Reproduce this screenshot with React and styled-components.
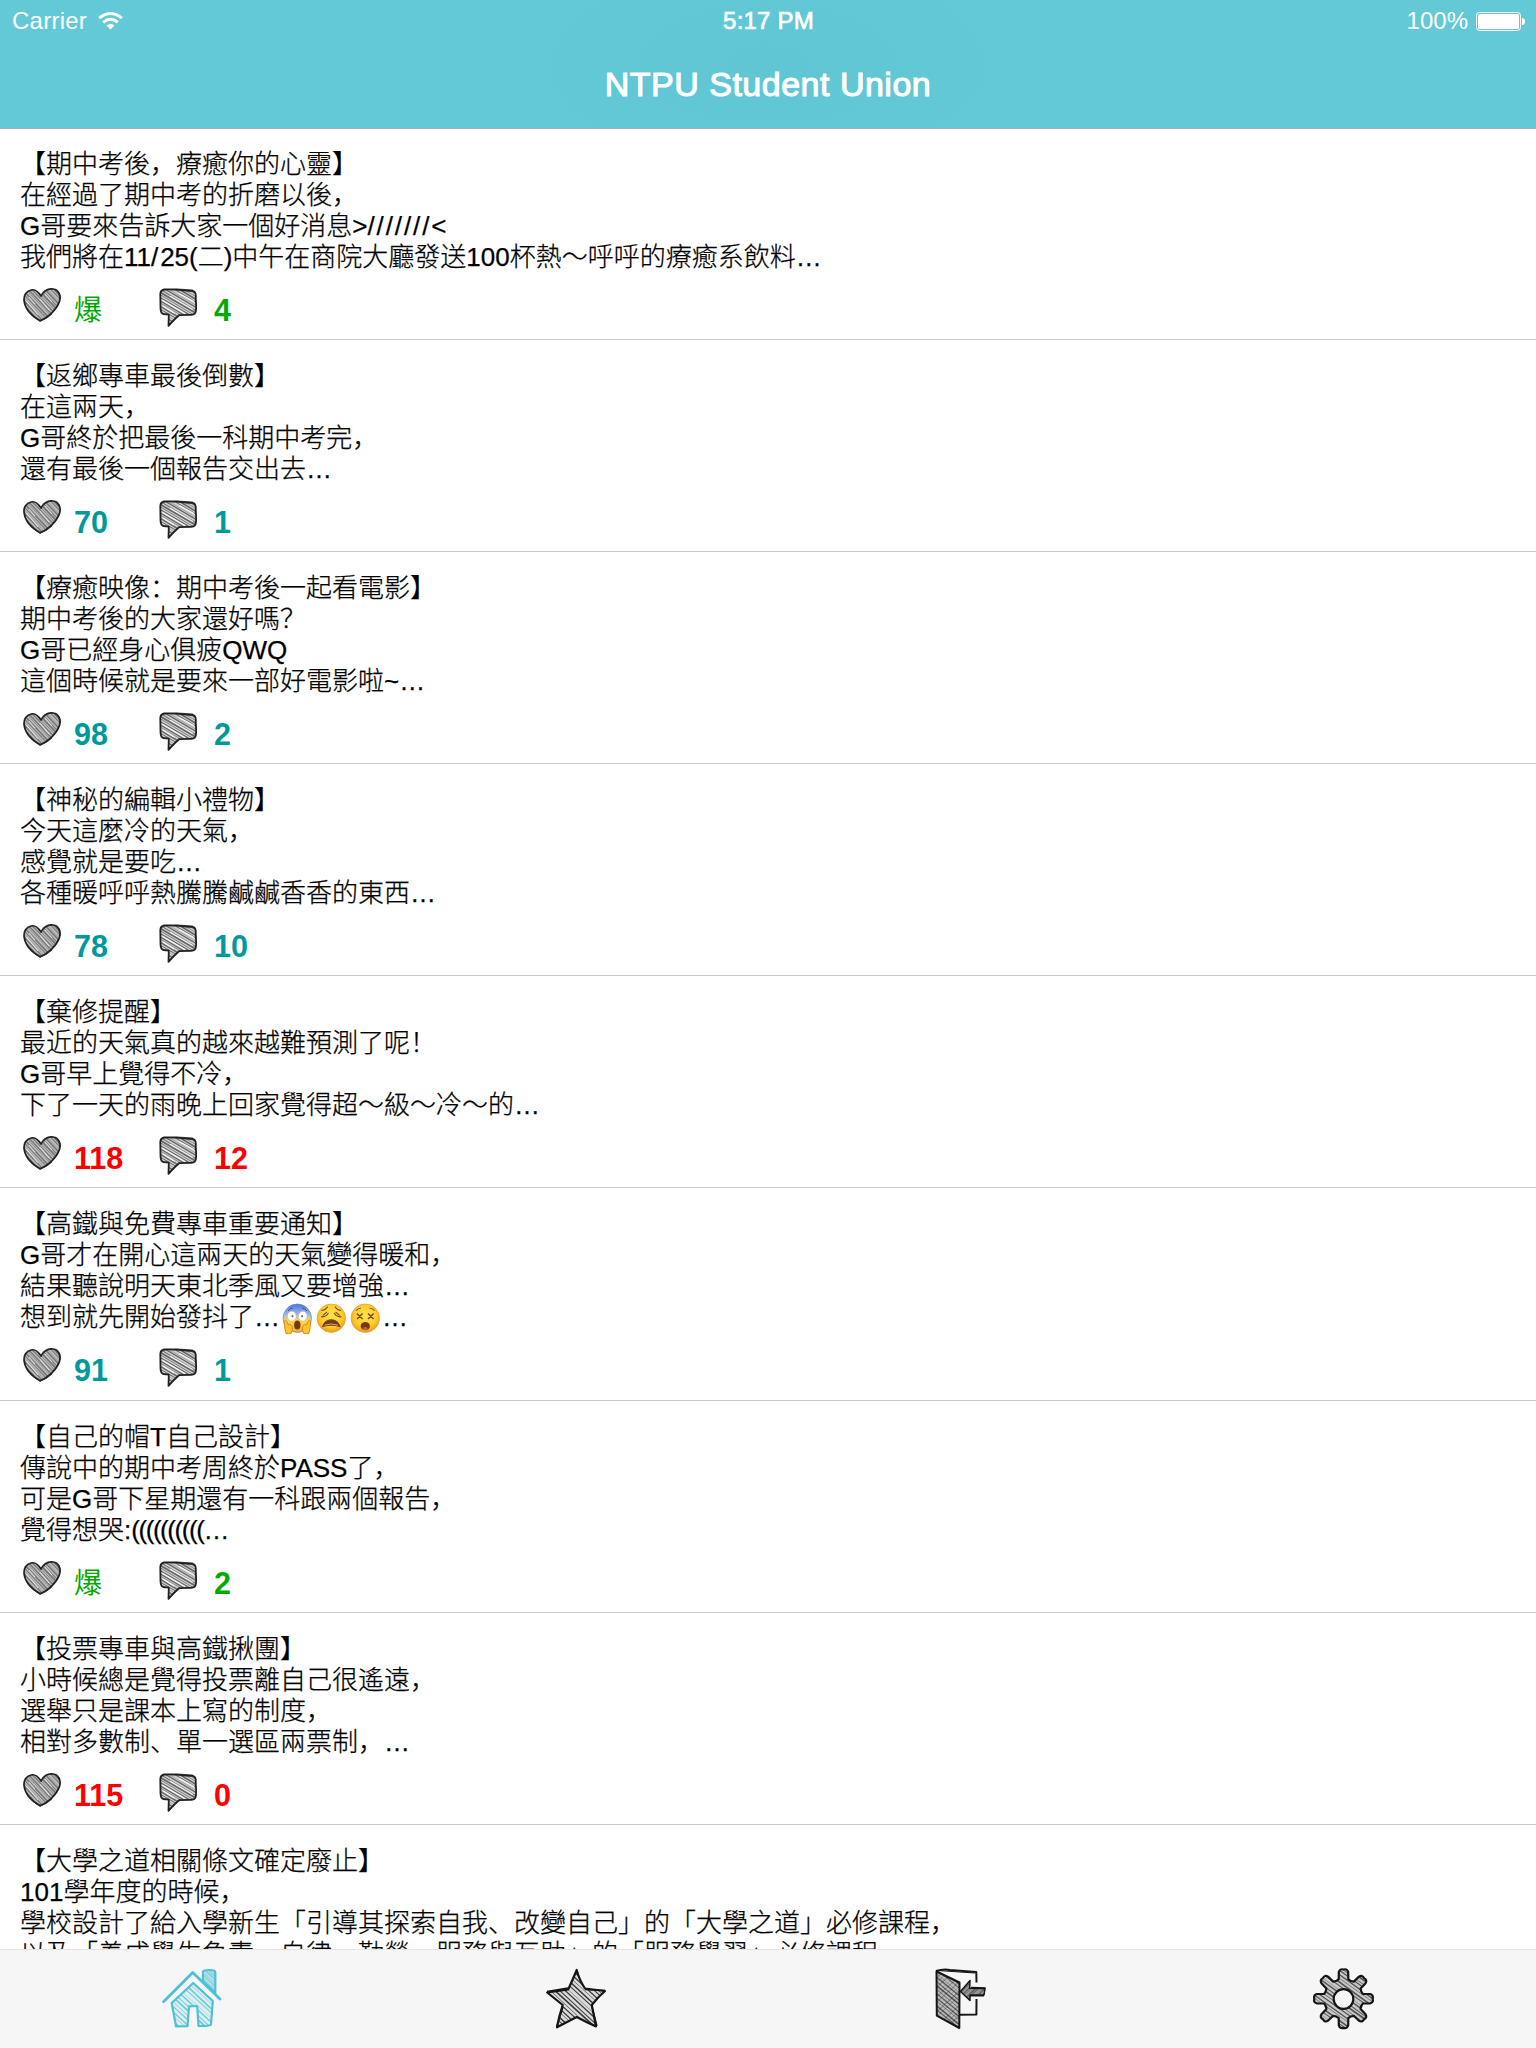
import React, { useId } from 'react';
import styled, { createGlobalStyle, css } from 'styled-components';

const GlobalStyle = createGlobalStyle`
  * { box-sizing: border-box; }
  html, body { margin: 0; padding: 0; background: #fff; overflow: hidden; }
`;

const latin = '"Liberation Sans", Arial';

const Screen = styled.div`
  width: 1536px;
  height: 2048px;
  display: flex;
  flex-direction: column;
  overflow: hidden;
  background: #fff;
  font-family: ${latin}, "Noto Sans CJK SC", sans-serif;
  text-spacing-trim: space-all;
`;

const Header = styled.header`
  flex: none;
  height: 129px;
  display: flex;
  flex-direction: column;
  border-bottom: 1px solid #a9b0b1;
  background: radial-gradient(ellipse 260px 120px at 50% 50%, #60c6d4, #63c9d7);
  color: #fff;
`;

const StatusBar = styled.div`
  height: 41px;
  padding: 1px 11px 0 12px;
  display: grid;
  grid-template-columns: 1fr auto 1fr;
  align-items: center;
  font-size: 24px;
  line-height: 40px;
`;

const StatusGroup = styled.div`
  display: flex;
  align-items: center;
  gap: ${(p) => p.$gap}px;
  justify-content: ${(p) => (p.$end ? 'flex-end' : 'flex-start')};
  letter-spacing: ${(p) => (p.$end ? 0 : 0.25)}px;
`;

const Clock = styled.div`
  letter-spacing: 0.2px;
  -webkit-text-stroke: 0.7px #fff;
`;

const Title = styled.h1`
  margin: 0;
  height: 87px;
  text-align: center;
  font-size: 34px;
  font-weight: 400;
  line-height: 86px;
  letter-spacing: 0.5px;
  -webkit-text-stroke: 1.1px #fff;
`;

const Feed = styled.main`
  flex: 1;
  min-height: 0;
  overflow: hidden;
`;

const Post = styled.article`
  height: 212.12px;
  padding: 21px 20px 0;
  border-bottom: 1px solid #c8c7cc;
  &:first-child { height: 211px; padding-top: 20px; }
`;

const Line = styled.p`
  margin: 0;
  height: 31px;
  font-size: 26px;
  font-weight: 300;
  line-height: 31px;
  color: #000;
  white-space: pre;
  -webkit-text-stroke: 0.25px #000;
`;

const Tracked = styled.span`
  letter-spacing: ${(p) => p.$by}px;
`;

const tones = { green: '#0a0', teal: '#009999', red: '#f00' };

const Stats = styled.div`
  display: flex;
  height: 48px;
  padding: 15px 0 0 3px;
  align-items: flex-start;
  color: ${(p) => tones[p.$tone]};
`;

const Count = styled.span`
  width: ${(p) => p.$width}px;
  padding-top: ${(p) => (p.$glyph ? 6 : 5)}px;
  margin-left: ${(p) => p.$gap}px;
  font-size: ${(p) => (p.$glyph ? 28 : 30.5)}px;
  font-weight: ${(p) => (p.$glyph ? 400 : 700)};
  line-height: 34px;
`;

const EmojiSlot = styled.span`
  display: inline-block;
  width: 34px;
  height: 31px;
  padding: 1px 0 0 2px;
  vertical-align: top;
`;

const TabBar = styled.nav`
  flex: none;
  height: 99px;
  display: grid;
  grid-template-columns: repeat(4, 1fr);
  border-top: 1px solid #e4e4e4;
  background: #f6f6f6;
`;

const Tab = styled.button`
  display: flex;
  justify-content: center;
  padding: 19px 0 0;
  border: 0;
  background: none;
  color: ${(p) => (p.$active ? '#4cc2d5' : '#151515')};
`;

const Icon = styled.svg`
  display: block;
  flex: none;
  overflow: visible;
  ${(p) => p.$dark && css`color: #202020;`}
`;

const weights = [1.3, 0.6, 1.6, 1.0, 0.4, 1.4, 1.0, 1.7, 0.7, 1.2];

function Hatch({ shape, angle, step = 2.9, tint = 0.14, strength = 0.85 }) {
  const id = useId().replace(/:/g, '');
  const lines = [];
  for (let i = 0; i < Math.ceil(96 / step); i += 1) {
    const y = -48 + i * step;
    lines.push(
      <path
        key={i}
        d={`M-48 ${y + (i % 3) * 0.3}L48 ${y - (i % 2) * 0.7}`}
        strokeWidth={weights[i % weights.length]}
      />
    );
  }
  return (
    <g>
      <clipPath id={id}><path d={shape} clipRule="evenodd" /></clipPath>
      <path d={shape} fill="currentColor" fillRule="evenodd" opacity={tint} />
      <g clipPath={`url(#${id})`}>
        <g transform={`translate(29 29) rotate(${angle})`} stroke="currentColor" opacity={strength}>
          {lines}
        </g>
      </g>
    </g>
  );
}

const heart = 'M18 8C14.5 2.5 12 1 8 2C3 3 .7 7.5 1 12C1.6 19 7 27 17.2 32.8C25 29.5 33.5 22 36.5 13.5C38.5 7 35 1.5 30.5 1C25.5 .3 21 2 18 8Z';
const HeartIcon = () => (
  <Icon width="38" height="34" viewBox="0 0 38 34" fill="none" $dark>
    <Hatch shape={heart} angle={47} step={2.3} tint={0.3} strength={0.45} />
    <g stroke="#fff" strokeWidth="1" opacity="0.75">
      <path d="M3.5 13L15 27M6 9L12 16M17 11L26 22M22 6L29 14" />
    </g>
    <path d={heart} stroke="currentColor" strokeWidth="1.7" strokeLinejoin="round" />
    <path d="M4 22Q9 29 17 33.3Q24 31 29 26" stroke="currentColor" strokeWidth="0.8" />
  </Icon>
);

const bubble = 'M5 1.5C15 .7 27 2.8 33.5 2.9Q36.8 3.2 36.8 8C36.5 13 38 20 36.5 24.5Q35.5 27 31 26.8L20 27.2Q16 30.5 9.5 37.8L9.8 26.7L4.5 26Q1.6 25.5 1.5 20L1.3 6Q1.5 2.2 5 1.5Z';
const BubbleIcon = () => (
  <Icon width="39" height="39" viewBox="0 0 39 39" fill="none" $dark>
    <Hatch shape={bubble} angle={31} step={2.4} tint={0.2} strength={0.6} />
    <g stroke="#fff" strokeWidth="1.2" opacity="0.85">
      <path d="M3 12L26 25.5M11 8L34 21.5M20 5.5L35 13.5M4 18L15 25" />
    </g>
    <path d={bubble} stroke="currentColor" strokeWidth="1.8" strokeLinejoin="round" />
    <path d="M4 1.8Q17 0 34 2" stroke="currentColor" strokeWidth="0.7" />
  </Icon>
);

const walls = 'M9.7 34L31.2 14L50.8 32L49 55.5Q48 57.2 36.5 57L35.2 37L27 37.3L25.5 57.2L14 57.3Z';
const chimney = 'M41 12.5V2.5Q42 1 47.5 1Q53.3 1 53.3 3V24Z';
const HomeIcon = () => (
  <Icon width="60" height="60" viewBox="0 0 60 60" fill="none">
    <Hatch shape={walls} angle={43} step={3.5} strength={0.8} />
    <Hatch shape={chimney} angle={43} step={2.6} tint={0.4} strength={0.45} />
    <g stroke="currentColor" strokeWidth="2.2" strokeLinejoin="round" strokeLinecap="round">
      <path d={walls} />
      <path d={chimney} />
      <path d="M1.5 32.8L30.7 3.5L58 30" strokeWidth="2.8" />
    </g>
  </Icon>
);

const star = 'M30.7 1C32.5 8 36 15 39 19.5L59 22Q52 28 45.8 36L50 57.5Q40 53 30.7 48L11 58.3Q13 47 16.7 36L1.2 23.5Q12 21.5 22.3 20.3Q27 10 30.7 1Z';
const StarIcon = () => (
  <Icon width="60" height="60" viewBox="0 0 60 60" fill="none">
    <Hatch shape={star} angle={43} step={3.3} tint={0.12} strength={0.8} />
    <path d={star} stroke="currentColor" strokeWidth="2.2" strokeLinejoin="round" />
    <path d="M22 19L1 22.5M39 20.5L59 21.5M17 38L10.5 58M46 38L51 57" stroke="currentColor" strokeWidth="1.4" />
  </Icon>
);

const door = 'M6.5 2.5L29.5 13.5L29.3 59L6.8 46.7Z';
const arrow = 'M30.5 22.5L40 11.5L39.6 19.2L55 19.5L54 26L40 26.2L40 31.5Z';
const DoorIcon = () => (
  <Icon width="60" height="60" viewBox="0 0 60 60" fill="none">
    <Hatch shape={door} angle={40} step={3.1} tint={0.25} strength={0.6} />
    <Hatch shape={door} angle={-42} step={3.6} tint={0} strength={0.25} />
    <Hatch shape={arrow} angle={-45} step={2.4} tint={0.4} strength={0.45} />
    <g stroke="currentColor" strokeWidth="2" strokeLinejoin="round">
      <path d={door} />
      <path d={arrow} strokeWidth="1.5" />
      <path d="M41 18.8L55.5 19.2M40 26.5H54" />
      <path d="M6 2Q13 -.2 20 .9L46.3 3L46.5 13.5M46.5 30L46.4 45.5L30 45.8" />
      <path d="M7 1.5L45 4" strokeWidth="1.2" />
    </g>
  </Icon>
);

function gearPath() {
  const at = (r, deg) => {
    const a = (deg * Math.PI) / 180;
    return `${(29.5 + r * Math.cos(a)).toFixed(1)} ${(29.7 + r * Math.sin(a)).toFixed(1)}`;
  };
  let d = '';
  for (let i = 0; i < 8; i += 1) {
    const c = i * 45 - 90;
    d += `${i ? 'L' : 'M'}${at(20, c - 14)}L${at(27, c - 10)}Q${at(30.5, c - 7)} ${at(29.2, c)}`;
    d += `Q${at(30.5, c + 7)} ${at(27, c + 10)}L${at(20, c + 14)}Q${at(18.6, c + 22.5)} ${at(20, c + 31)}`;
  }
  return `${d}ZM39.3 30A9.8 9.8 0 1 0 19.7 30A9.8 9.8 0 1 0 39.3 30Z`;
}

const gear = gearPath();
const GearIcon = () => (
  <Icon width="60" height="60" viewBox="0 0 60 60" fill="none">
    <Hatch shape={gear} angle={36} step={3.1} tint={0.2} strength={0.65} />
    <path d={gear} stroke="currentColor" strokeWidth="2.2" strokeLinejoin="round" />
  </Icon>
);

const WifiIcon = () => (
  <Icon width="25" height="18" viewBox="0 0 25 18" fill="none">
    <g stroke="#fff" strokeWidth="2.9">
      <path d="M1.2 6.1Q12.5 -3.1 23.8 6.1" />
      <path d="M5.2 10.3Q12.5 4.2 19.8 10.3" />
    </g>
    <path d="M8.5 13.4Q12.5 10.2 16.5 13.4L12.5 17.6Z" fill="#fff" />
  </Icon>
);

const BatteryIcon = () => (
  <Icon width="49" height="19" viewBox="0 0 49 19" fill="none">
    <rect x="0.5" y="0.5" width="44" height="18" rx="3" stroke="#fff" />
    <rect x="2" y="2" width="41" height="15" rx="1.6" fill="#fff" />
    <path d="M46 6Q49 6.4 49 9.5T46 13Z" fill="#fff" />
  </Icon>
);

function Emoji({ kind }) {
  const id = useId().replace(/:/g, '');
  const scream = kind === 'scream';
  return (
    <EmojiSlot>
      <Icon width="31" height="31" viewBox="0 0 31 31">
        <defs>
          <radialGradient id={`${id}f`} cx="50%" cy="42%" r="58%">
            <stop offset="0" stopColor="#ffe34a" />
            <stop offset="0.65" stopColor="#ffce2e" />
            <stop offset="1" stopColor="#f09a1c" />
          </radialGradient>
          <linearGradient id={`${id}s`} x1="0" y1="0" x2="0" y2="1">
            <stop offset="0" stopColor="#4a74d8" />
            <stop offset="0.38" stopColor="#a3bce9" />
            <stop offset="0.58" stopColor="#ffdb50" />
            <stop offset="1" stopColor="#f5ae22" />
          </linearGradient>
        </defs>
        <circle cx="15.3" cy="15.2" r="14.2" fill={`url(#${id}${scream ? 's' : 'f'})`} stroke={scream ? '#5d83cf' : '#e79a25'} strokeWidth="0.7" />
        {scream && (
          <g>
            <path d="M6 8Q8 5 11 5M20 5Q23 5 25 8" fill="none" stroke="#34539c" strokeWidth="1" />
            <ellipse cx="9.8" cy="13.2" rx="4.4" ry="5" fill="#fff" stroke="#b7a982" strokeWidth="0.5" />
            <ellipse cx="20.8" cy="13.2" rx="4.4" ry="5" fill="#fff" stroke="#b7a982" strokeWidth="0.5" />
            <circle cx="10.5" cy="13.3" r="1" fill="#6b5336" />
            <circle cx="20.1" cy="13.3" r="1" fill="#6b5336" />
            <ellipse cx="15.3" cy="22" rx="3.2" ry="4.6" fill="#77380e" />
            <path d="M2.2 18Q3.5 16 5 18.5L6.2 22Q8.5 20.5 10 23Q11.5 27.5 9 30.6L4 30.6Q2.5 27 2.2 18ZM28.6 18Q27.3 16 25.8 18.5L24.6 22Q22.3 20.5 20.8 23Q19.3 27.5 21.8 30.6L26.8 30.6Q28.3 27 28.6 18Z" fill="#ffc42b" stroke="#cf7d16" strokeWidth="0.8" />
          </g>
        )}
        {kind === 'weary' && (
          <g fill="none" stroke="#70430f" strokeWidth="1.1" strokeLinecap="round">
            <path d="M6 7.5Q9.5 7 11.5 4M19.2 4Q21 7 24.6 7.5" />
            <path d="M5.5 13.8Q10 14.2 12.2 10.3M7.2 12.2L10.6 9.4M18.4 10.3Q20.6 14.2 25.2 13.8M20 9.4L23.4 12.2" />
            <path d="M6.6 23.6Q9 16.8 15.3 16.8T24 23.6Q15.3 20.6 6.6 23.6Z" fill="#7b3b11" />
            <path d="M9 22Q15.3 19.8 21.6 22" stroke="#e8c9a0" strokeWidth="0.8" />
          </g>
        )}
        {kind === 'dizzy' && (
          <g>
            <path d="M6 7.6Q8 5 11 5.2M19.6 5.2Q22.6 5 24.6 7.6" fill="none" stroke="#8a5714" strokeWidth="1.1" />
            <path d="M7 10.5L12.6 16M12.6 10.5L7 16M18 10.5L23.6 16M23.6 10.5L18 16" stroke="#70430f" strokeWidth="1.3" />
            <ellipse cx="15.3" cy="23.2" rx="4.6" ry="4.1" fill="#77380e" />
            <ellipse cx="15.3" cy="25.4" rx="2.6" ry="1.5" fill="#b36c37" />
          </g>
        )}
      </Icon>
    </EmojiSlot>
  );
}

// Slashes are set slightly loose, runs of parentheses tight.
function setLine(line) {
  if (typeof line !== 'string') return line;
  return line.split(/(\/+|\({2,})/).map((part, i) => {
    if (i % 2 === 0) return part;
    return <Tracked key={i} $by={part[0] === '/' ? 1.9 : -1.44}>{part}</Tracked>;
  });
}

const posts = [
  { tone: 'green', likes: '爆', comments: 4, lines: ['【期中考後，療癒你的心靈】', '在經過了期中考的折磨以後，', 'G哥要來告訴大家一個好消息>///////<', '我們將在11/25(二)中午在商院大廳發送100杯熱～呼呼的療癒系飲料…'] },
  { tone: 'teal', likes: 70, comments: 1, lines: ['【返鄉專車最後倒數】', '在這兩天，', 'G哥終於把最後一科期中考完，', '還有最後一個報告交出去…'] },
  { tone: 'teal', likes: 98, comments: 2, lines: ['【療癒映像：期中考後一起看電影】', '期中考後的大家還好嗎？', 'G哥已經身心俱疲QWQ', '這個時候就是要來一部好電影啦~…'] },
  { tone: 'teal', likes: 78, comments: 10, lines: ['【神秘的編輯小禮物】', '今天這麼冷的天氣，', '感覺就是要吃…', '各種暖呼呼熱騰騰鹹鹹香香的東西…'] },
  { tone: 'red', likes: 118, comments: 12, lines: ['【棄修提醒】', '最近的天氣真的越來越難預測了呢！', 'G哥早上覺得不冷，', '下了一天的雨晚上回家覺得超～級～冷～的…'] },
  { tone: 'teal', likes: 91, comments: 1, lines: ['【高鐵與免費專車重要通知】', 'G哥才在開心這兩天的天氣變得暖和，', '結果聽說明天東北季風又要增強…', <>想到就先開始發抖了…<Emoji kind="scream" /><Emoji kind="weary" /><Emoji kind="dizzy" />…</>] },
  { tone: 'green', likes: '爆', comments: 2, lines: ['【自己的帽T自己設計】', '傳說中的期中考周終於PASS了，', '可是G哥下星期還有一科跟兩個報告，', '覺得想哭:((((((((((…'] },
  { tone: 'red', likes: 115, comments: 0, lines: ['【投票專車與高鐵揪團】', '小時候總是覺得投票離自己很遙遠，', '選舉只是課本上寫的制度，', '相對多數制、單一選區兩票制，…'] },
  { tone: 'teal', lines: ['【大學之道相關條文確定廢止】', '101學年度的時候，', '學校設計了給入學新生「引導其探索自我、改變自己」的「大學之道」必修課程，', '以及「養成學生負責、自律、勤勞、服務與互助」的「服務學習」必修課程，'] },
];

const tabs = [HomeIcon, StarIcon, DoorIcon, GearIcon];

export default function App() {
  return (
    <Screen lang="zh-Hans">
      <GlobalStyle />
      <Header>
        <StatusBar>
          <StatusGroup $gap={11}>Carrier<WifiIcon /></StatusGroup>
          <Clock>5:17 PM</Clock>
          <StatusGroup $gap={8} $end>100%<BatteryIcon /></StatusGroup>
        </StatusBar>
        <Title>NTPU Student Union</Title>
      </Header>
      <Feed>
        {posts.map((post, i) => (
          <Post key={i}>
            {post.lines.map((line, j) => <Line key={j}>{setLine(line)}</Line>)}
            {post.likes !== undefined && (
              <Stats $tone={post.tone}>
                <HeartIcon />
                <Count $width={85} $gap={13} $glyph={post.likes === '爆'}>{post.likes}</Count>
                <BubbleIcon />
                <Count $width={60} $gap={16}>{post.comments}</Count>
              </Stats>
            )}
          </Post>
        ))}
      </Feed>
      <TabBar>
        {tabs.map((TabIcon, i) => <Tab key={i} $active={i === 0}><TabIcon /></Tab>)}
      </TabBar>
    </Screen>
  );
}
